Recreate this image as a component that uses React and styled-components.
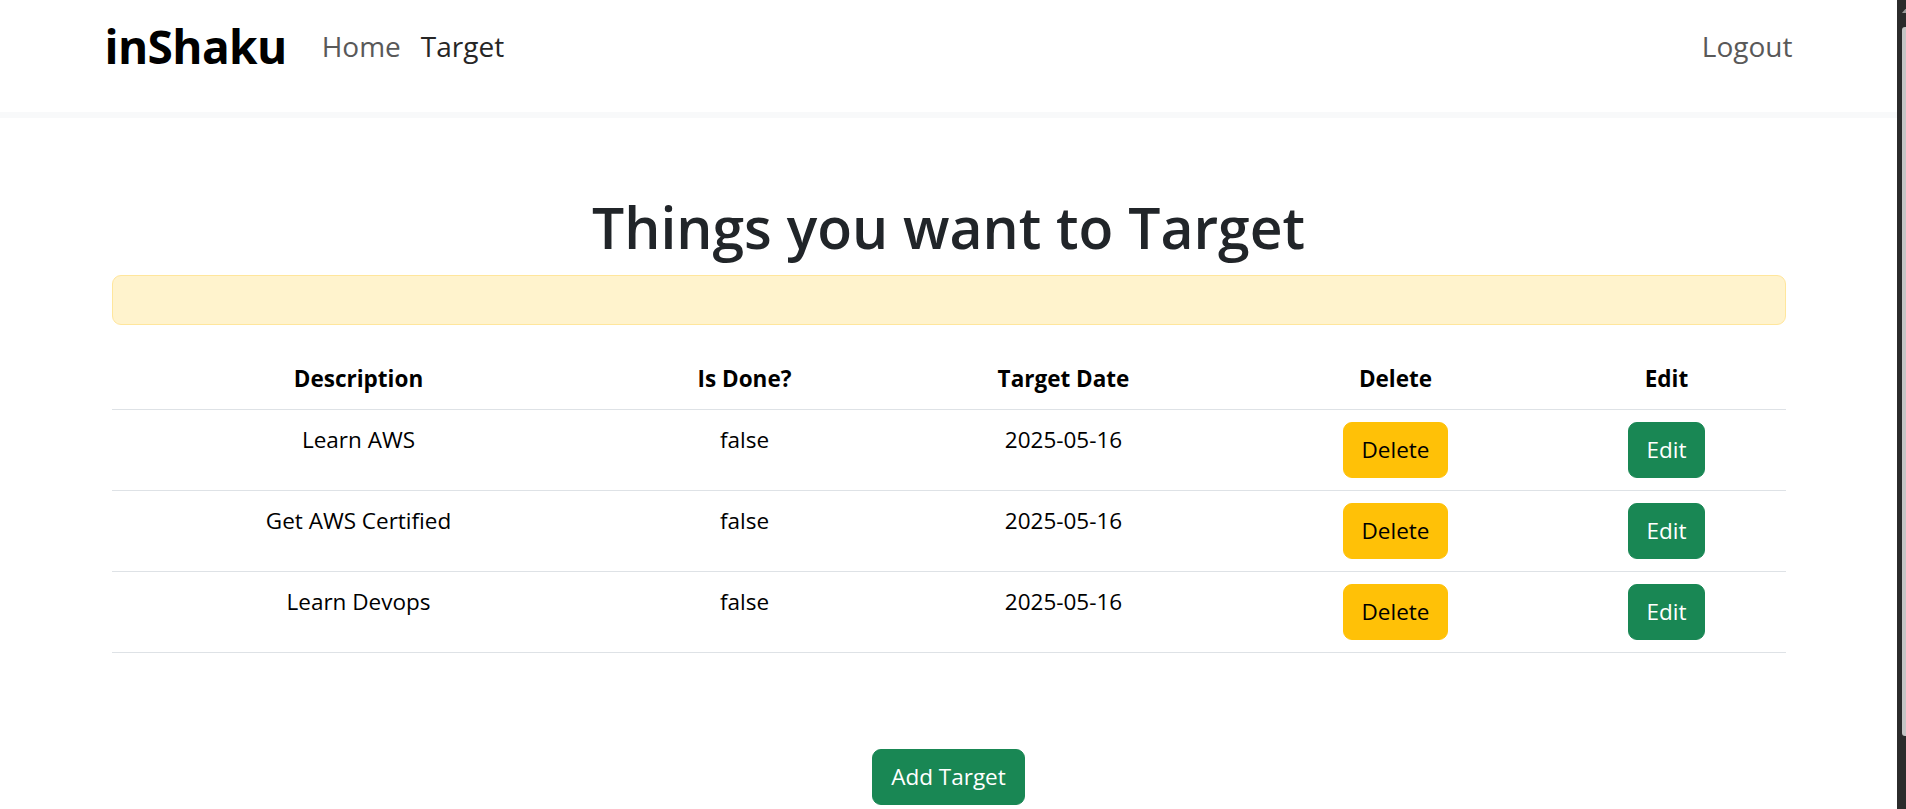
import React from "react";
import styled, { createGlobalStyle } from "styled-components";

const targets = [
  { id: 1, description: "Learn AWS", done: false, date: "2025-05-16" },
  { id: 2, description: "Get AWS Certified", done: false, date: "2025-05-16" },
  { id: 3, description: "Learn Devops", done: false, date: "2025-05-16" },
];

const GlobalStyle = createGlobalStyle`
  html, body {
    margin: 0;
    padding: 0;
    height: 100%;
    overflow: hidden;
  }
  body {
    font-family: "Open Sans", "Noto Sans", sans-serif;
    font-size: 24px;
    line-height: 1.5;
    color: #212529;
    background: #fff;
  }
  * { box-sizing: border-box; }
`;

const Window = styled.div`
  display: flex;
  height: 809px;
  width: 1906px;
`;

const Page = styled.div`
  flex: 1;
  min-width: 0;
  background: #fff;
`;

const Scrollbar = styled.div`
  width: 9px;
  background: #2b2b2b;
  display: flex;
  flex-direction: column;
  align-items: flex-end;
  padding-top: 6px;
  gap: 14px;
  .arrow {
    width: 0;
    height: 0;
    border-left: 6px solid transparent;
    border-bottom: 7px solid #9a9a9a;
    margin-right: -2px;
  }
  .thumb {
    width: 4px;
    height: 709px;
    background: #c5c5c5;
    border-radius: 3px 0 0 3px;
  }
`;

const Navbar = styled.nav`
  height: 112px;
  background: #fff;
  box-shadow: 0 6px 0 #f8f9fa;
  position: relative;
  z-index: 1;
`;

const NavInner = styled.div`
  width: 1688px;
  margin: 0 auto;
  height: 100%;
  padding-bottom: 20px;
  display: flex;
  align-items: center;
`;

const Brand = styled.a`
  font-size: 46px;
  font-weight: 700;
  color: #000;
  text-decoration: none;
  margin-right: 25px;
  letter-spacing: -0.6px;
`;

const NavLink = styled.a`
  font-size: 28px;
  color: ${(p) => (p.$active ? "#262626" : "#595959")};
  text-decoration: none;
  padding: 0 10px;
  &:first-of-type {
    padding-left: 0;
  }
  &:last-child {
    padding-right: 0;
  }
`;

const Spacer = styled.div`
  flex: 1;
`;

const Container = styled.main`
  width: 1674px;
  margin: 0 auto;
  padding-top: 79px;
  display: flex;
  flex-direction: column;
`;

const Title = styled.h1`
  margin: 0 0 12px;
  font-size: 57px;
  font-weight: 600;
  line-height: 72px;
  text-align: center;
  color: #212529;
`;

const Alert = styled.div`
  height: 50px;
  background: #fff3cd;
  border: 1.5px solid #ffe69c;
  border-radius: 9px;
  margin-bottom: 24px;
`;

const Table = styled.table`
  width: 100%;
  border-collapse: collapse;
  table-layout: fixed;
  color: #000;
  margin-bottom: 24px;
  th, td {
    text-align: center;
    vertical-align: top;
    padding: 12px;
    border-bottom: 1.5px solid #dee2e6;
    font-size: 22.5px;
    line-height: 36px;
  }
  th {
    font-weight: 700;
  }
`;

const Button = styled.button`
  font-family: inherit;
  font-size: 22.5px;
  line-height: 36px;
  padding: 9px 18px;
  border: 1.5px solid ${(p) => p.$bg};
  background: ${(p) => p.$bg};
  color: ${(p) => p.$color};
  border-radius: 9px;
  cursor: pointer;
`;

const Footer = styled.div`
  display: flex;
  justify-content: center;
  padding-top: 72px;
`;

export default function App() {
  return (
    <>
      <GlobalStyle />
      <Window>
        <Page>
          <Navbar>
            <NavInner>
              <Brand href="#">inShaku</Brand>
              <NavLink href="#">Home</NavLink>
              <NavLink href="#" $active>
                Target
              </NavLink>
              <Spacer />
              <NavLink href="#">Logout</NavLink>
            </NavInner>
          </Navbar>
          <Container>
            <Title>Things you want to Target</Title>
            <Alert />
            <Table>
              <colgroup>
                <col style={{ width: 494 }} />
                <col style={{ width: 278 }} />
                <col style={{ width: 360 }} />
                <col style={{ width: 304 }} />
                <col style={{ width: 238 }} />
              </colgroup>
              <thead>
                <tr>
                  <th>Description</th>
                  <th>Is Done?</th>
                  <th>Target Date</th>
                  <th>Delete</th>
                  <th>Edit</th>
                </tr>
              </thead>
              <tbody>
                {targets.map((t) => (
                  <tr key={t.id}>
                    <td>{t.description}</td>
                    <td>{String(t.done)}</td>
                    <td>{t.date}</td>
                    <td>
                      <Button $bg="#ffc107" $color="#000">
                        Delete
                      </Button>
                    </td>
                    <td>
                      <Button $bg="#198754" $color="#fff">
                        Edit
                      </Button>
                    </td>
                  </tr>
                ))}
              </tbody>
            </Table>
            <Footer>
              <Button $bg="#198754" $color="#fff">
                Add Target
              </Button>
            </Footer>
          </Container>
        </Page>
        <Scrollbar>
          <div className="arrow" />
          <div className="thumb" />
        </Scrollbar>
      </Window>
    </>
  );
}
